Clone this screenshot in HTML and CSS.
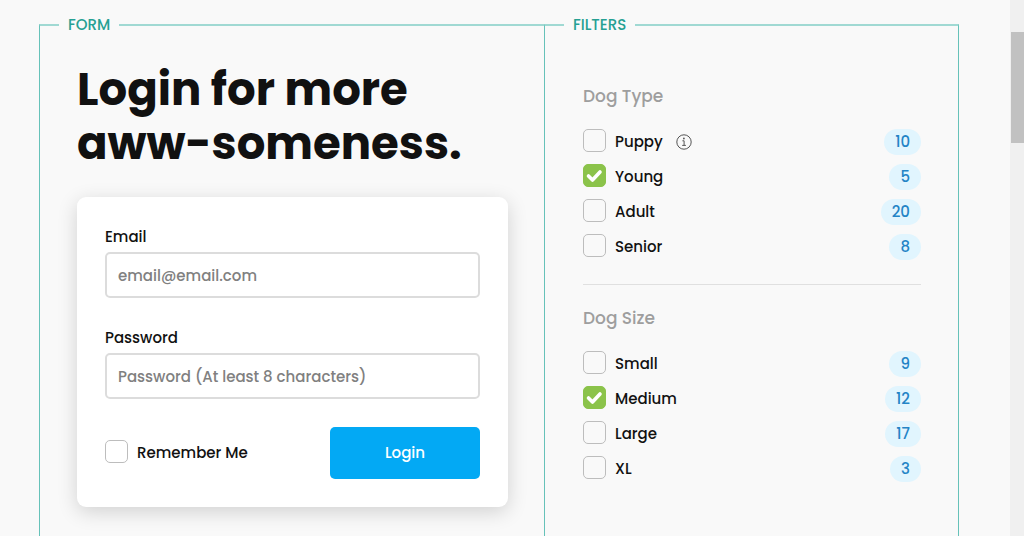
FILE: index.html
```html
<!DOCTYPE html>
<html lang="en">
<head>
<meta charset="utf-8">
<meta name="viewport" content="width=device-width, initial-scale=1">
<title>Form and filters</title>
<link rel="stylesheet" href="styles.css">
</head>
<body>
<main class="board">
  <fieldset class="panel">
    <legend class="panel-name">FORM</legend>
    <div class="panel-body">
      <h1 class="headline">Login for more<br>aww-someness.</h1>
      <form class="card">
        <div class="field">
          <label for="email">Email</label>
          <input class="text-input" id="email" type="email" placeholder="email@email.com">
        </div>
        <div class="field">
          <label for="password">Password</label>
          <input class="text-input" id="password" type="password" placeholder="Password (At least 8 characters)">
        </div>
        <div class="actions">
          <label class="check"><span class="box"><input type="checkbox"><svg viewBox="0 0 23 23" aria-hidden="true"><path d="M5.5 12l4 4L17 8"/></svg></span>Remember Me</label>
          <button class="login" type="button">Login</button>
        </div>
      </form>
    </div>
  </fieldset>

  <fieldset class="panel panel-last">
    <legend class="panel-name">FILTERS</legend>
    <div class="panel-body filters">
      <section class="group">
        <h2 class="group-title">Dog Type</h2>
        <ul class="options">
          <li class="option">
            <label class="check"><span class="box"><input type="checkbox"><svg viewBox="0 0 23 23" aria-hidden="true"><path d="M5.5 12l4 4L17 8"/></svg></span>Puppy</label>
            <svg class="info" viewBox="0 0 16 16" role="img" aria-label="Info"><circle cx="8" cy="8" r="7.2"/><path d="M6.4 6.8h1.7v4.4M6.2 11.4h3.7"/><circle class="dot" cx="7.9" cy="4.5" r=".9"/></svg>
            <span class="count">10</span>
          </li>
          <li class="option">
            <label class="check"><span class="box"><input type="checkbox" checked><svg viewBox="0 0 23 23" aria-hidden="true"><path d="M5.5 12l4 4L17 8"/></svg></span>Young</label>
            <span class="count">5</span>
          </li>
          <li class="option">
            <label class="check"><span class="box"><input type="checkbox"><svg viewBox="0 0 23 23" aria-hidden="true"><path d="M5.5 12l4 4L17 8"/></svg></span>Adult</label>
            <span class="count">20</span>
          </li>
          <li class="option">
            <label class="check"><span class="box"><input type="checkbox"><svg viewBox="0 0 23 23" aria-hidden="true"><path d="M5.5 12l4 4L17 8"/></svg></span>Senior</label>
            <span class="count">8</span>
          </li>
        </ul>
      </section>
      <section class="group">
        <h2 class="group-title">Dog Size</h2>
        <ul class="options">
          <li class="option">
            <label class="check"><span class="box"><input type="checkbox"><svg viewBox="0 0 23 23" aria-hidden="true"><path d="M5.5 12l4 4L17 8"/></svg></span>Small</label>
            <span class="count">9</span>
          </li>
          <li class="option">
            <label class="check"><span class="box"><input type="checkbox" checked><svg viewBox="0 0 23 23" aria-hidden="true"><path d="M5.5 12l4 4L17 8"/></svg></span>Medium</label>
            <span class="count">12</span>
          </li>
          <li class="option">
            <label class="check"><span class="box"><input type="checkbox"><svg viewBox="0 0 23 23" aria-hidden="true"><path d="M5.5 12l4 4L17 8"/></svg></span>Large</label>
            <span class="count">17</span>
          </li>
          <li class="option">
            <label class="check"><span class="box"><input type="checkbox"><svg viewBox="0 0 23 23" aria-hidden="true"><path d="M5.5 12l4 4L17 8"/></svg></span>XL</label>
            <span class="count">3</span>
          </li>
        </ul>
      </section>
    </div>
  </fieldset>
</main>
<div class="track" aria-hidden="true"><div class="thumb"></div></div>
</body>
</html>
```
FILE: styles.css
```css
*, *::before, *::after { box-sizing: border-box; }

body {
  margin: 0;
  min-height: 100vh;
  display: flex;
  background: #f9f9f9;
  color: #111;
  font-family: Poppins, Inter, sans-serif;
  font-size: 15px;
  font-weight: 500;
  line-height: 24px;
}

h1, h2, ul { margin: 0; padding: 0; }
input, button { font: inherit; }

.board {
  flex: 1;
  display: grid;
  grid-template-columns: 101fr 83fr;
  padding: 13px 51px 0 39px;
}

.panel {
  min-width: 0;
  margin: 0;
  padding: 0;
  border-style: solid;
  border-width: 2px 0 0 1px;
  border-color: #a0d9d3 #66c2b9 #66c2b9 #66c2b9;
}
.panel-last { border-right-width: 1px; }

.panel-name {
  margin-left: 19px;
  padding: 0 9px;
  color: #26a093;
}

.panel-body { padding: 26px 36px 29px 37px; }

.headline {
  margin-bottom: 26px;
  font-size: 45px;
  font-weight: 700;
  line-height: 54px;
}

.card {
  display: flex;
  flex-direction: column;
  gap: 28px;
  padding: 28px;
  border-radius: 9px;
  background: #fff;
  box-shadow: 0 5px 20px rgba(0, 0, 0, .16);
}

.field { display: flex; flex-direction: column; gap: 3px; }

.text-input {
  width: 100%;
  height: 46px;
  padding: 0 11px;
  border: 2px solid #dcdcdc;
  border-radius: 5px;
  background: #fff;
  color: #111;
}
.text-input::placeholder { color: #808080; opacity: 1; }

.actions { display: flex; align-items: center; justify-content: space-between; }

.login {
  width: 150px;
  height: 52px;
  border: 0;
  border-radius: 5px;
  background: #03a9f4;
  color: #fff;
}

.check { display: flex; gap: 9px; line-height: 26px; }

.box { display: grid; width: 23px; height: 23px; }
.box > * { grid-area: 1 / 1; width: 23px; height: 23px; margin: 0; }
.box input {
  appearance: none;
  border: 1px solid #bdbdbd;
  border-radius: 5px;
}
.box svg {
  visibility: hidden;
  pointer-events: none;
  fill: none;
  stroke: #fff;
  stroke-width: 3.6;
  stroke-linecap: round;
  stroke-linejoin: round;
}
.box input:checked { border-color: #8bc34a; background: #8bc34a; }
.box input:checked + svg { visibility: visible; }

.filters { padding: 47px 37px 29px 38px; }

.group + .group {
  margin-top: 24px;
  padding-top: 21px;
  border-top: 1px solid #e0e0e0;
}
.group-title {
  margin-bottom: 21px;
  color: #9e9e9e;
  font-size: 17px;
  font-weight: 500;
}

.options { display: grid; gap: 9px; list-style: none; }
.option { display: flex; align-items: center; gap: 13px; height: 26px; }

.info { width: 16px; height: 16px; fill: none; stroke: #555; stroke-width: 1; }
.info .dot { fill: #555; stroke: none; }

.count {
  margin-left: auto;
  padding: 0 11px;
  border-radius: 13px;
  background: #e1f5fe;
  color: #2484c6;
  line-height: 26px;
}

.track { width: 14px; padding: 32px 0 0 1px; background: #f0f0f0; }
.thumb { height: 111px; background: #c1c1c1; }
```
